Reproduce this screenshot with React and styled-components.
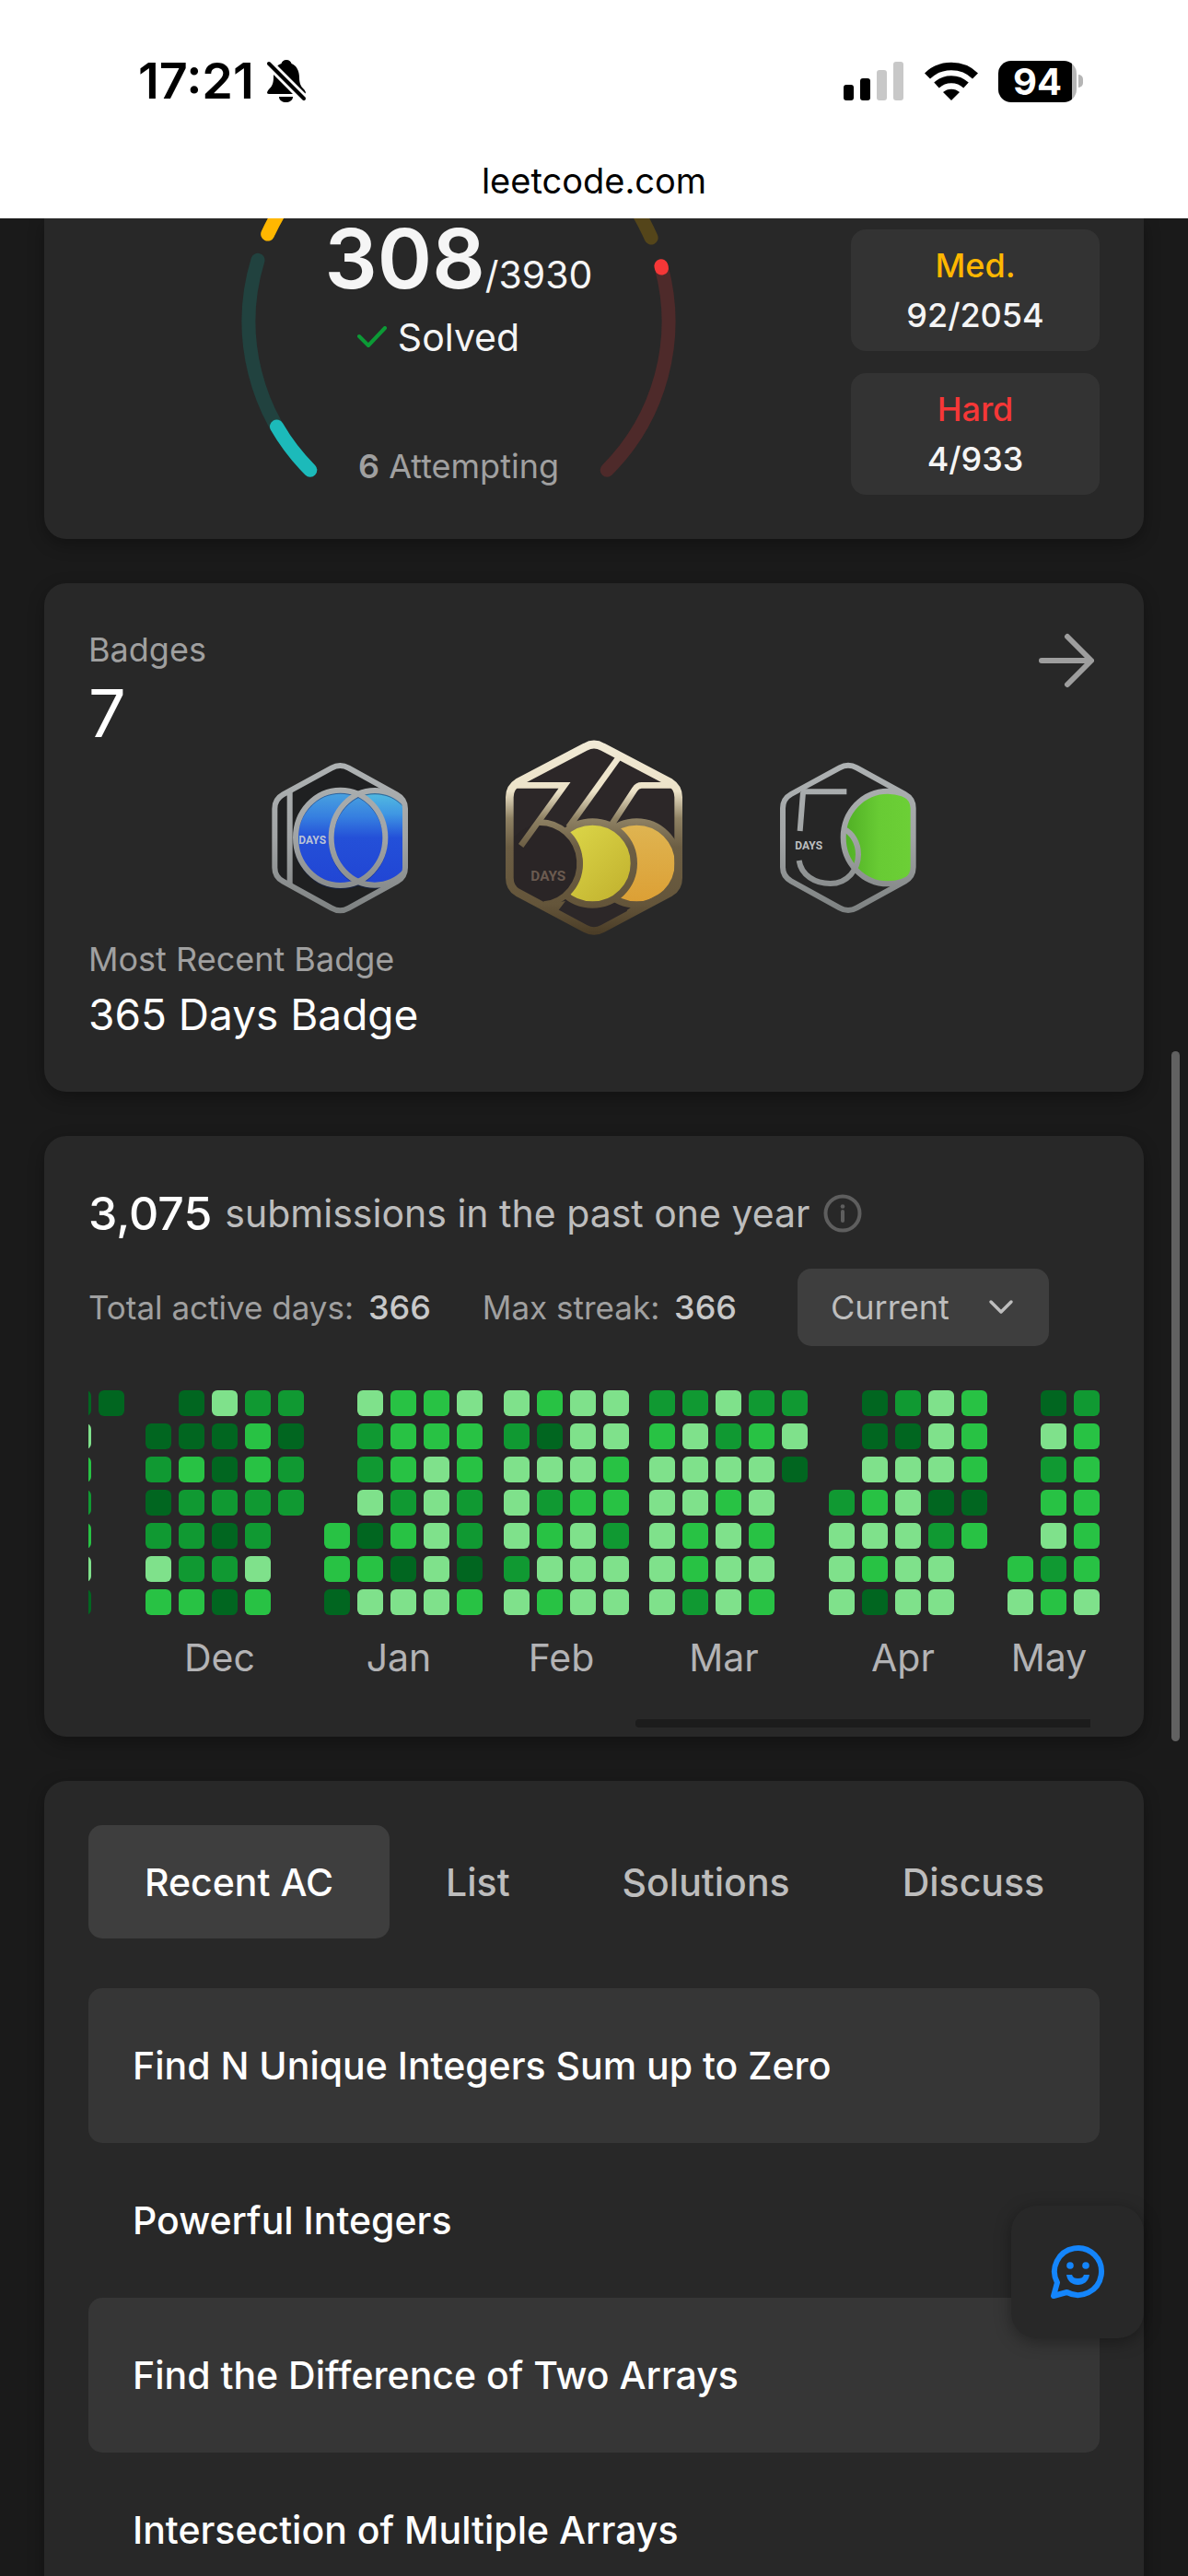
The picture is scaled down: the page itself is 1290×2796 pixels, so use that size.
import React from "react";
import styled, { createGlobalStyle } from "styled-components";

const GlobalStyle = createGlobalStyle`
  *, *::before, *::after { box-sizing: border-box; }
  body {
    margin: 0;
    background: #1a1a1a;
    color: #fff;
    font-family: Inter, "Liberation Sans", sans-serif;
  }
  button, select { font-family: inherit; border: 0; }
  a { color: inherit; text-decoration: none; }
  h2, p, ul { margin: 0; padding: 0; }
`;

const Shell = styled.div`
  position: relative;
  display: flex;
  flex-direction: column;
  height: 100vh;
  overflow: hidden;
`;

/* ---------- browser chrome ---------- */

const Chrome = styled.header`
  flex: none;
  display: flex;
  flex-direction: column;
  gap: 46px;
  padding: 61px 0 5px;
  background: #fff;
  color: #000;
`;

const StatusBar = styled.div`
  display: flex;
  align-items: center;
  justify-content: space-between;
  height: 54px;
  padding: 0 114px 0 150px;
`;

const StatusGroup = styled.div`
  display: flex;
  align-items: center;
  gap: ${(p) => p.$gap}px;
`;

const Clock = styled.span`
  font-size: 54px;
  line-height: 54px;
  font-weight: 600;
`;

const Battery = styled.div`
  display: flex;
  align-items: center;
  gap: 2px;
`;

const BatteryBody = styled.div`
  display: flex;
  align-items: center;
  justify-content: center;
  width: 85px;
  height: 45px;
  border-radius: 14px;
  background: linear-gradient(90deg, #000 80px, #b5b5b5 80px);
  color: #fff;
  font-size: 40px;
  line-height: 45px;
  font-weight: 700;
`;

const BatteryTip = styled.span`
  width: 5px;
  height: 14px;
  border-radius: 0 7px 7px 0;
  background: #b5b5b5;
`;

const Address = styled.p`
  text-align: center;
  font-size: 38px;
  line-height: 71px;
`;

/* ---------- page ---------- */

const Page = styled.main`
  flex: 1;
  min-height: 0;
  display: flex;
  flex-direction: column;
  gap: 48px;
  padding: 0 48px;
  overflow-y: auto;
  scrollbar-width: none;
`;

const Card = styled.section`
  flex: none;
  padding: ${(p) => p.$pad || "48px"};
  border-radius: ${(p) => (p.$cut ? "0 0 24px 24px" : "24px")};
  background: #282828;
  box-shadow: 0 6px 18px rgba(0, 0, 0, 0.3);
`;

const SolvedLayout = styled.div`
  display: flex;
  gap: 24px;
`;

const RingArea = styled.div`
  flex: 1;
  display: grid;
  justify-items: center;
  align-items: start;
  margin-top: -12px;

  > * { grid-area: 1 / 1; }
`;

const RingText = styled.div`
  display: flex;
  flex-direction: column;
  align-items: center;
`;

const Total = styled.p`
  display: flex;
  align-items: baseline;
  height: 90px;
  color: #f5f5f5;
  font-size: 41px;
  line-height: 48px;

  strong { font-size: 90px; line-height: 88px; font-weight: 600; }
`;

const SolvedLabel = styled.p`
  display: flex;
  align-items: center;
  gap: 12px;
  margin-top: 9px;
  padding-right: 44px;
  color: #f5f5f5;
  font-size: 41px;
  line-height: 60px;
`;

const Attempting = styled.p`
  margin-top: 86px;
  color: #a0a0a0;
  font-size: 36px;
  line-height: 48px;

  strong { font-weight: 600; }
`;

const LevelList = styled.div`
  display: flex;
  flex-direction: column;
  gap: 24px;
  width: 270px;
`;

const Level = styled.div`
  display: flex;
  flex-direction: column;
  align-items: center;
  justify-content: center;
  gap: 6px;
  height: 132px;
  border-radius: 16px;
  background: #333;
  color: ${(p) => p.$color};
  font-size: 36px;
  line-height: 48px;
  font-weight: 500;

  span { color: #f5f5f5; }
`;

/* ---------- badges ---------- */

const BadgeHead = styled.div`
  display: flex;
  justify-content: space-between;
  align-items: flex-start;
`;

const Caption = styled.p`
  color: #a0a0a0;
  font-size: 36px;
  line-height: 48px;
`;

const BadgeCount = styled.p`
  font-size: 72px;
  line-height: 90px;
`;

const ArrowLink = styled.a`
  display: flex;
  padding: 6px;
  color: #9e9e9e;
`;

const BadgeRow = styled.div`
  display: flex;
  align-items: center;
  justify-content: center;
  gap: 96px;
  margin-top: -18px;
`;

const BadgeName = styled.p`
  font-size: 46px;
  line-height: 72px;
`;

/* ---------- submissions ---------- */

const Headline = styled.h2`
  display: flex;
  align-items: center;
  height: 72px;
  color: #bdbdbd;
  font-size: 41px;
  font-weight: 400;
  gap: 14px;

  strong { color: #fff; font-size: 50px; font-weight: 500; }
`;

const Stats = styled.div`
  display: flex;
  align-items: center;
  margin-top: 24px;
`;

const Stat = styled.p`
  margin-right: 56px;
  color: #a0a0a0;
  font-size: 35px;
  line-height: 48px;

  strong { margin-left: 6px; color: #c8c8c8; font-size: 36px; font-weight: 500; }
`;

const SelectBox = styled.label`
  display: grid;
  align-items: center;
  width: 273px;
  margin-left: 10px;
  color: #bdbdbd;

  > * { grid-area: 1 / 1; }
  svg { justify-self: end; margin-right: 38px; pointer-events: none; }
`;

const Select = styled.select`
  appearance: none;
  width: 100%;
  height: 84px;
  padding: 0 36px;
  border-radius: 15px;
  background: #3e3e3e;
  color: #bdbdbd;
  font-size: 36px;
`;

const Viewport = styled.div`
  margin-top: 48px;
  overflow: hidden;
`;

const Months = styled.div`
  display: flex;
  justify-content: space-between;
  width: calc(100% + 25px);
  margin-left: -25px;
`;

const Month = styled.div`
  display: flex;
  flex-direction: column;
  align-items: center;
  gap: 22px;
`;

const Days = styled.div`
  display: grid;
  grid-auto-flow: column;
  grid-template-rows: repeat(7, 28px);
  grid-auto-columns: 28px;
  gap: 8px;
`;

const levels = ["transparent", "#016620", "#109932", "#28c244", "#7fe18b"];

const Day = styled.span`
  border-radius: 6px;
  background: ${(p) => levels[p.$level]};
`;

const MonthName = styled.span`
  height: 48px;
  padding-right: 10px;
  color: #b3b3b5;
  font-size: 41px;
  line-height: 48px;
`;

const ScrollTrack = styled.div`
  width: 45%;
  height: 9px;
  margin: 43px 10px 0 auto;
  border-radius: 4px 0 0 4px;
  background: #1c1c1c;
`;

/* ---------- recent ---------- */

const Tabs = styled.div`
  display: flex;
`;

const Tab = styled.button`
  flex: none;
  height: 123px;
  padding: 0 61px;
  border-radius: 15px;
  background: ${(p) => (p.$active ? "#3e3e3e" : "transparent")};
  color: ${(p) => (p.$active ? "#fff" : "#bdbdbd")};
  font-size: 41px;
  font-weight: 500;
  white-space: nowrap;
`;

const Problems = styled.ul`
  margin-top: 54px;
  list-style: none;
`;

const Problem = styled.li`
  border-radius: 15px;
  background: ${(p) => (p.$shaded ? "#363636" : "transparent")};

  a {
    display: block;
    padding: 0 48px;
    font-size: 41px;
    line-height: 168px;
    font-weight: 500;
  }
`;

const ChatButton = styled.button`
  position: absolute;
  right: 48px;
  bottom: 258px;
  display: flex;
  align-items: center;
  justify-content: center;
  width: 144px;
  height: 144px;
  border-radius: 28px;
  background: #282828;
  box-shadow: 0 4px 18px rgba(0, 0, 0, 0.35);
`;

const PageThumb = styled.div`
  position: absolute;
  top: 40.8%;
  right: 9px;
  width: 9px;
  height: 26.8%;
  border-radius: 5px;
  background: #616161;
`;

/* ---------- drawings ---------- */

const BellOff = () => (
  <svg width="44" height="48" viewBox="0 0 44 48" aria-hidden="true">
    <path d="M22 1c-3 0-5 2-5.500 4C10 7 8 13 8 20c0 7-2 10-5 13-2 2-3 5 0 5h38c3 0 2-3 0-5-3-3-5-6-5-13 0-7-3-13-8.500-15C27 3 25 1 22 1z" />
    <path d="M14 41h15c0 4-4 6-7.500 6S14 45 14 41z" />
    <path d="M3 5l38 38" stroke="#fff" strokeWidth="10" />
    <path d="M3 5l38 38" stroke="#000" strokeWidth="4" strokeLinecap="round" />
  </svg>
);

const Signal = () => (
  <svg width="66" height="42" viewBox="0 0 66 42" aria-hidden="true">
    <rect x="0" y="25" width="11" height="17" rx="3" />
    <rect x="18" y="18" width="11" height="24" rx="3" />
    <rect x="36" y="9" width="11" height="33" rx="3" fill="#c8c8c8" />
    <rect x="54" y="0" width="11" height="42" rx="3" fill="#c8c8c8" />
  </svg>
);

const Wifi = () => (
  <svg width="58" height="42" viewBox="0 0 58 42" fill="none" aria-hidden="true">
    <path d="M3 15.500C17 1.500 41 1.500 55 15.500" stroke="#000" strokeWidth="8.500" />
    <path d="M13 25.500C22 17 36 17 45 25.500" stroke="#000" strokeWidth="8" />
    <path d="M29 42l-9-9c5-4.500 13-4.500 18 0z" fill="#000" />
  </svg>
);

const CX = 236;
const CY = 112;
const R = 228;
const point = (deg) => {
  const a = (deg * Math.PI) / 180;
  return `${(CX + R * Math.cos(a)).toFixed(1)} ${(CY + R * Math.sin(a)).toFixed(1)}`;
};
const arc = (from, to) => `M${point(from)}A${R} ${R} 0 0 1 ${point(to)}`;

const arcs = [
  { from: 135, to: 197, color: "#21423f" },
  { from: 135, to: 150, color: "#1cbaba" },
  { from: 204.6, to: 336.5, color: "#54451a" },
  { from: 204.6, to: 222, color: "#ffb700" },
  { from: 345, to: 405, color: "#4e2a2a" },
  { from: 344.7, to: 345.3, color: "#f63737" },
];

const Ring = () => (
  <svg width="472" height="288" viewBox="0 0 472 288" fill="none" aria-hidden="true">
    {arcs.map((a, i) => (
      <path key={i} d={arc(a.from, a.to)} stroke={a.color} strokeWidth="15" strokeLinecap="round" />
    ))}
  </svg>
);

const Check = () => (
  <svg width="32" height="24" viewBox="0 0 32 24" fill="none" aria-hidden="true">
    <path d="M2 11l10 10L30 2" stroke="#0c9a36" strokeWidth="4" strokeLinecap="round" strokeLinejoin="round" />
  </svg>
);

const Arrow = () => (
  <svg width="60" height="60" viewBox="0 0 60 60" fill="none" aria-hidden="true">
    <path d="M3 30h53M31 4l26 26-26 26" stroke="currentColor" strokeWidth="6" strokeLinecap="round" strokeLinejoin="round" />
  </svg>
);

const Info = () => (
  <svg width="42" height="42" viewBox="0 0 42 42" fill="none" aria-hidden="true">
    <circle cx="21" cy="21" r="18.500" stroke="#5e5e5e" strokeWidth="4" />
    <path d="M21 19v10" stroke="#5e5e5e" strokeWidth="4" strokeLinecap="round" />
    <circle cx="21" cy="13.500" r="2.300" fill="#5e5e5e" />
  </svg>
);

const Chevron = () => (
  <svg width="28" height="18" viewBox="0 0 28 18" fill="none" aria-hidden="true">
    <path d="M3 3l11 11L25 3" stroke="currentColor" strokeWidth="3.500" strokeLinecap="round" strokeLinejoin="round" />
  </svg>
);

const Chat = () => (
  <svg width="60" height="60" viewBox="0 0 60 60" fill="none" aria-hidden="true">
    <path
      d="M4 56l4-14.500A25.500 25.500 0 1 1 18.500 52z"
      stroke="#1485fb"
      strokeWidth="6"
      strokeLinejoin="round"
    />
    <circle cx="22" cy="23" r="3.800" fill="#1485fb" />
    <circle cx="39" cy="23" r="3.800" fill="#1485fb" />
    <path d="M18 33h25c-1 7-6 11-12.500 11S19 40 18 33z" fill="#1485fb" />
    <path d="M24 33h13c-1 3-3 4-6.500 4s-5.500-1-6.500-4z" fill="#282828" />
  </svg>
);

const SMALL_HEX =
  "M270 128Q298 112 326 128L482 214Q510 229 510 260V452Q510 482 484 497L326 584Q298 600 270 584L112 497Q85 482 85 452V260Q85 229 112 214Z";
const LARGE_HEX =
  "M1095 58Q1123 42 1151 58L1372 174Q1398 190 1398 222V484Q1398 516 1372 532L1151 650Q1123 665 1095 650L874 532Q848 516 848 484V222Q848 190 874 174Z";

const BadgeLabel = styled.text`
  font-family: Roboto, "Liberation Sans", sans-serif;
  font-size: ${(p) => p.$size}px;
  font-weight: 700;
`;

const Silver = ({ id }) => (
  <linearGradient id={id} gradientUnits="userSpaceOnUse" x1="0" y1="110" x2="0" y2="600">
    <stop offset="0" stopColor="#aeb2b3" />
    <stop offset="0.5" stopColor="#a1a4a5" />
    <stop offset="1" stopColor="#7d8181" />
  </linearGradient>
);

const Badge100 = () => (
  <svg width="160" height="176" viewBox="57 90 480 528" fill="none" role="img" aria-label="100 Days Badge">
    <defs>
      <Silver id="silver100" />
      <linearGradient id="blue" gradientUnits="userSpaceOnUse" x1="0" y1="200" x2="0" y2="510">
        <stop offset="0" stopColor="#4ba6df" />
        <stop offset="0.28" stopColor="#367fe0" />
        <stop offset="0.5" stopColor="#2450d8" />
        <stop offset="1" stopColor="#2145d4" />
      </linearGradient>
      <linearGradient id="sky" gradientUnits="userSpaceOnUse" x1="0" y1="200" x2="0" y2="510">
        <stop offset="0" stopColor="#55bfe0" />
        <stop offset="0.25" stopColor="#3f97e3" />
        <stop offset="0.5" stopColor="#2350d9" />
        <stop offset="1" stopColor="#2145d4" />
      </linearGradient>
      <clipPath id="clip100"><path d={SMALL_HEX} /></clipPath>
    </defs>
    <path d={SMALL_HEX} fill="#1f2021" />
    <g clipPath="url(#clip100)">
      <ellipse cx="411" cy="355" rx="142" ry="154" fill="url(#sky)" />
      <ellipse cx="299" cy="355" rx="146" ry="155" fill="url(#blue)" />
      <g stroke="#12235c" strokeOpacity="0.5" strokeWidth="15">
        <ellipse cx="411" cy="360" rx="142" ry="154" />
        <ellipse cx="299" cy="360" rx="146" ry="155" />
      </g>
      <g stroke="url(#silver100)" strokeWidth="18">
        <ellipse cx="411" cy="355" rx="142" ry="154" />
        <ellipse cx="299" cy="355" rx="146" ry="155" />
        <rect x="125" y="200" width="18" height="312" stroke="none" fill="url(#silver100)" />
      </g>
    </g>
    <path d={SMALL_HEX} stroke="url(#silver100)" strokeWidth="18" />
    <BadgeLabel x="163" y="375" $size={36} fill="#b9c3d6">DAYS</BadgeLabel>
  </svg>
);

const Badge365 = () => (
  <svg width="200" height="216" viewBox="823 29 600 648" fill="none" role="img" aria-label="365 Days Badge">
    <defs>
      <linearGradient id="gold" gradientUnits="userSpaceOnUse" x1="0" y1="40" x2="0" y2="665">
        <stop offset="0" stopColor="#f1ead6" />
        <stop offset="0.26" stopColor="#ece2c8" />
        <stop offset="0.4" stopColor="#8f8264" />
        <stop offset="0.55" stopColor="#6c5e44" />
        <stop offset="0.85" stopColor="#64553a" />
        <stop offset="1" stopColor="#4b3d27" />
      </linearGradient>
      <linearGradient id="yellow" x1="0" y1="0" x2="1" y2="1">
        <stop offset="0" stopColor="#e0dc4c" />
        <stop offset="1" stopColor="#bfae2c" />
      </linearGradient>
      <linearGradient id="orange" x1="0" y1="0" x2="0" y2="1">
        <stop offset="0" stopColor="#dfb552" />
        <stop offset="1" stopColor="#dc9f34" />
      </linearGradient>
      <clipPath id="clip365"><path d={LARGE_HEX} /></clipPath>
    </defs>
    <path d={LARGE_HEX} fill="#2c2728" />
    <g clipPath="url(#clip365)">
      <path d="M1230 590L1400 470V560L1240 615Z" fill="url(#gold)" />
      <circle cx="1262" cy="437" r="135" fill="url(#orange)" stroke="url(#gold)" strokeWidth="22" />
      <circle cx="1118" cy="437" r="135" fill="url(#yellow)" stroke="url(#gold)" strokeWidth="22" />
      <circle cx="958" cy="437" r="128" fill="#2a2526" />
      <path d="M965 571L1030 560L1000 600Z" fill="url(#gold)" />
      <g stroke="url(#gold)" strokeWidth="20">
        <path d="M938 304A130 134 0 0 1 960 571" />
        <path d="M848 183H1027L885 380" />
        <path d="M1205 90L1040 320" />
        <path d="M1400 183H1278Q1264 183 1256 196L1178 315" />
      </g>
    </g>
    <path d={LARGE_HEX} stroke="url(#gold)" strokeWidth="26" />
    <BadgeLabel x="917" y="493" $size={46} fill="#6b5b50">DAYS</BadgeLabel>
  </svg>
);

const Badge50 = () => (
  <svg width="160" height="176" viewBox="603 91 480 528" fill="none" role="img" aria-label="50 Days Badge">
    <defs>
      <Silver id="silver50" />
      <linearGradient id="green" x1="0" y1="0" x2="1" y2="0">
        <stop offset="0" stopColor="#4fae24" />
        <stop offset="0.4" stopColor="#68cb34" />
        <stop offset="1" stopColor="#6fd238" />
      </linearGradient>
      <clipPath id="clip50"><path d={SMALL_HEX} transform="translate(545 0)" /></clipPath>
    </defs>
    <path d={SMALL_HEX} transform="translate(545 0)" fill="#262626" />
    <g clipPath="url(#clip50)">
      <ellipse cx="972" cy="355" rx="145" ry="151" fill="url(#green)" stroke="url(#silver50)" strokeWidth="18" />
    </g>
    <g stroke="url(#silver50)" strokeWidth="18">
      <path d="M690 206H838M696 208L686 334" />
      <path d="M683 430C690 478 735 505 785 505C840 505 876 460 876 410C876 370 855 340 830 328" />
      <path d={SMALL_HEX} transform="translate(545 0)" />
    </g>
    <BadgeLabel x="670" y="394" $size={36} fill="#bcbfc0">DAYS</BadgeLabel>
  </svg>
);

/* ---------- data ---------- */

const months = [
  { name: "", weeks: ["1432341", "1000000"] },
  { name: "Dec", weeks: ["0121243", "1132223", "4112121", "2332243", "2122000"] },
  { name: "Jan", weeks: ["0000331", "4224134", "3332314", "3344444", "4332213"] },
  { name: "Feb", weeks: ["4244424", "3142343", "4443444", "4433244"] },
  { name: "Mar", weeks: ["2344444", "2444332", "4243444", "2344343", "2410000"] },
  { name: "Apr", weeks: ["0002444", "1143431", "2144444", "4441244", "3331300"] },
  { name: "May", weeks: ["0000034", "1423423", "2333334"] },
];

const tabs = ["Recent AC", "List", "Solutions", "Discuss"];

const problems = [
  "Find N Unique Integers Sum up to Zero",
  "Powerful Integers",
  "Find the Difference of Two Arrays",
  "Intersection of Multiple Arrays",
];

export default function App() {
  return (
    <Shell>
      <GlobalStyle />
      <Chrome>
        <StatusBar>
          <StatusGroup $gap={13}>
            <Clock>17:21</Clock>
            <BellOff />
          </StatusGroup>
          <StatusGroup $gap={22}>
            <Signal />
            <Wifi />
            <Battery>
              <BatteryBody>94</BatteryBody>
              <BatteryTip />
            </Battery>
          </StatusGroup>
        </StatusBar>
        <Address>leetcode.com</Address>
      </Chrome>

      <Page>
        <Card $cut $pad="12px 48px 48px">
          <SolvedLayout>
            <RingArea>
              <Ring />
              <RingText>
                <Total><strong>308</strong>/3930</Total>
                <SolvedLabel><Check />Solved</SolvedLabel>
                <Attempting><strong>6</strong> Attempting</Attempting>
              </RingText>
            </RingArea>
            <LevelList>
              <Level $color="#ffb700">Med.<span>92/2054</span></Level>
              <Level $color="#f63737">Hard<span>4/933</span></Level>
            </LevelList>
          </SolvedLayout>
        </Card>

        <Card>
          <BadgeHead>
            <div>
              <Caption>Badges</Caption>
              <BadgeCount>7</BadgeCount>
            </div>
            <ArrowLink href="#badges" aria-label="All badges"><Arrow /></ArrowLink>
          </BadgeHead>
          <BadgeRow>
            <Badge100 />
            <Badge365 />
            <Badge50 />
          </BadgeRow>
          <Caption>Most Recent Badge</Caption>
          <BadgeName>365 Days Badge</BadgeName>
        </Card>

        <Card $pad="48px 48px 10px">
          <Headline>
            <strong>3,075</strong>
            <span>submissions in the past one year</span>
            <Info />
          </Headline>
          <Stats>
            <Stat>Total active days: <strong>366</strong></Stat>
            <Stat>Max streak: <strong>366</strong></Stat>
            <SelectBox>
              <Select aria-label="Period" defaultValue="Current">
                <option>Current</option>
              </Select>
              <Chevron />
            </SelectBox>
          </Stats>
          <Viewport>
            <Months>
              {months.map((m, i) => (
                <Month key={i}>
                  <Days>
                    {m.weeks.flatMap((w, wi) =>
                      [...w].map((d, di) => <Day key={`${wi}-${di}`} $level={Number(d)} />)
                    )}
                  </Days>
                  <MonthName>{m.name}</MonthName>
                </Month>
              ))}
            </Months>
          </Viewport>
          <ScrollTrack />
        </Card>

        <Card>
          <Tabs>
            {tabs.map((t, i) => (
              <Tab key={t} type="button" $active={i === 0}>{t}</Tab>
            ))}
          </Tabs>
          <Problems>
            {problems.map((p, i) => (
              <Problem key={p} $shaded={i % 2 === 0}><a href="#problem">{p}</a></Problem>
            ))}
          </Problems>
        </Card>
      </Page>

      <ChatButton type="button" aria-label="Feedback"><Chat /></ChatButton>
      <PageThumb />
    </Shell>
  );
}
